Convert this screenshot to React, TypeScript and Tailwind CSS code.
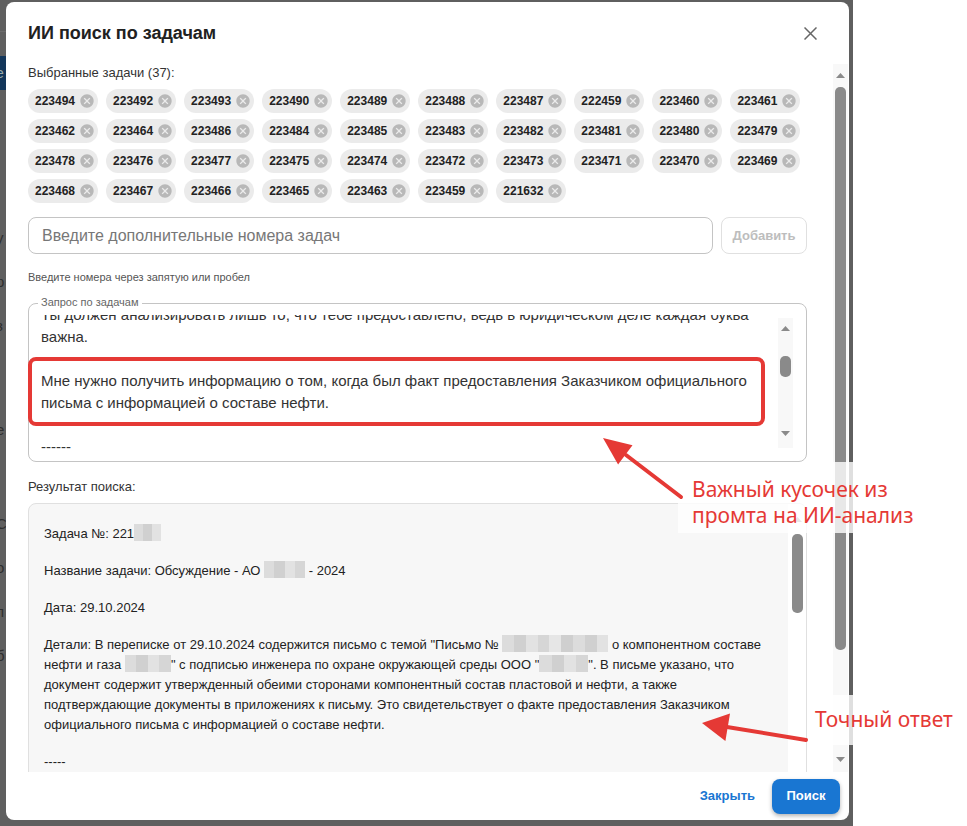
import React from 'react'

const chips = [
    '223494', '223492', '223493', '223490', '223489', '223488', '223487', '222459', '223460', '223461',
    '223462', '223464', '223486', '223484', '223485', '223483', '223482', '223481', '223480', '223479',
    '223478', '223476', '223477', '223475', '223474', '223472', '223473', '223471', '223470', '223469',
    '223468', '223467', '223466', '223465', '223463', '223459', '221632',
]

const blurCells = ['bg-[#dcdcdc]', 'bg-[#d0d0d0]', 'bg-[#e2e2e2]', 'bg-[#d6d6d6]', 'bg-[#e6e6e6]', 'bg-[#cfcfcf]']

function Blur({ className, cells }: { className: string; cells: number }) {
    return (
        <span className={`inline-flex h-[17px] align-[-3px] ${className}`}>
            {Array.from({ length: cells }).map((_, i) => (
                <span key={i} className={`h-full flex-1 ${blurCells[i % blurCells.length]}`} />
            ))}
        </span>
    )
}

function Arrow({ up }: { up?: boolean }) {
    return (
        <svg width="9" height="5" viewBox="0 0 9 5">
            <polygon points={up ? '4.5,0 9,5 0,5' : '0,0 9,0 4.5,5'} fill="#8a8a8a" />
        </svg>
    )
}

function Chip({ label }: { label: string }) {
    return (
        <div className="flex h-6 items-center rounded-full bg-[#ebebeb] pl-[7px] pr-[3px]">
            <span className="text-[12px] font-bold text-[#222]">{label}</span>
            <svg className="ml-[4px] h-4 w-4" viewBox="0 0 24 24">
                <path
                    fill="#b8b8b8"
                    d="M12 2C6.47 2 2 6.47 2 12s4.47 10 10 10 10-4.47 10-10S17.53 2 12 2zm5 13.59L15.59 17 12 13.41 8.41 17 7 15.59 10.59 12 7 8.41 8.41 7 12 10.59 15.59 7 17 8.41 13.41 12 17 15.59z"
                />
            </svg>
        </div>
    )
}

export default function App() {
    return (
        <div className="relative h-[826px] w-[967px] overflow-hidden bg-white font-['Liberation_Sans',Arial,sans-serif]">
            {/* page behind the backdrop */}
            <div className="absolute inset-y-0 left-0 w-[853px] bg-[#5f5f5f]">
                <div className="mt-[31px] h-px w-[6px] bg-[#6c6c6c]" />
                <div className="mt-[24px] flex h-[34px] w-[6px] items-center overflow-hidden bg-[#13365a] text-[14px] text-[#9aa]">
                    <span className="-ml-[4px]">e</span>
                </div>
                <div className="mt-[140px] flex w-[6px] flex-col gap-[28px] overflow-hidden text-[15px] leading-[16px] text-[#2e2e2e]">
                    <span className="-ml-[4px]">у</span>
                    <span className="-ml-[4px]">р</span>
                    <span className="-ml-[4px]">з</span>
                    <span className="mt-[60px] -ml-[4px]">е</span>
                    <span className="mt-[50px] -ml-[4px]">С</span>
                    <span className="-ml-[4px]">о</span>
                    <span className="-ml-[4px]">п</span>
                    <span className="-ml-[4px]">б</span>
                </div>
            </div>

            {/* dialog */}
            <div className="absolute left-[6px] top-[2px] flex h-[818px] w-[843px] flex-col rounded-lg bg-white">
                <div className="flex h-[62px] shrink-0 items-center justify-between pl-[22px] pr-[32px]">
                    <h2 className="text-[18px] font-bold text-[#212121]">ИИ поиск по задачам</h2>
                    <svg className="h-[13px] w-[13px]" viewBox="0 0 13 13">
                        <path d="M0.5 0.5 L12.5 12.5 M12.5 0.5 L0.5 12.5" stroke="#666" strokeWidth="1.5" />
                    </svg>
                </div>

                <div className="flex h-[708px] shrink-0">
                    <div className="min-w-0 flex-1 overflow-hidden pl-[22px] pr-[26px]">
                        <div className="text-[13px] leading-[18px] text-[#333]">Выбранные задачи (37):</div>
                        <div className="mt-[7px] flex flex-wrap gap-x-[8px] gap-y-[6px]">
                            {chips.map((c) => (
                                <Chip key={c} label={c} />
                            ))}
                        </div>

                        <div className="mt-[14px] flex gap-[8px]">
                            <div className="flex h-[37px] flex-1 items-center rounded-lg border border-[#c4c4c4] px-[13px] text-[16px] text-[#777]">
                                Введите дополнительные номера задач
                            </div>
                            <button className="h-[37px] w-[86px] rounded-lg border border-[#e0e0e0] text-[13px] font-bold text-[#bdbdbd]">
                                Добавить
                            </button>
                        </div>
                        <div className="mt-[16px] text-[11px] leading-[14px] text-[#555]">
                            Введите номера через запятую или пробел
                        </div>

                        <div className="relative mt-[19px] flex h-[159px] rounded-lg border border-[#c4c4c4]">
                            <span className="absolute -top-[9px] left-[9px] bg-white px-[3px] text-[11px] leading-[14px] text-[#666]">
                                Запрос по задачам
                            </span>
                            <div className="mt-[11px] h-[140px] flex-1 overflow-hidden pl-[12px]">
                                <div className="-mt-[11px] whitespace-nowrap text-[15px] leading-[22px] text-[#333]">
                                    <div>Ты должен анализировать лишь то, что тебе предоставлено, ведь в юридическом деле каждая буква</div>
                                    <div>важна.</div>
                                    <div>&nbsp;</div>
                                    <div>Мне нужно получить информацию о том, когда был факт предоставления Заказчиком официального</div>
                                    <div>письма с информацией о составе нефти.</div>
                                    <div>&nbsp;</div>
                                    <div>------</div>
                                </div>
                            </div>
                            <div className="mr-[13px] mt-[14px] flex h-[130px] w-[15px] flex-col items-center bg-[#f8f8f8]">
                                <div className="flex h-[21px] items-center">
                                    <Arrow up />
                                </div>
                                <div className="mt-[17px] h-[21px] w-[11px] rounded-[5px] bg-[#8a8a8a]" />
                                <div className="flex-1" />
                                <div className="mb-[10px] flex h-[10px] items-center">
                                    <Arrow />
                                </div>
                            </div>
                        </div>

                        <div className="mt-[16px] text-[13px] leading-[18px] text-[#333]">Результат поиска:</div>
                        <div className="mt-[7px] flex h-[320px] rounded-t-lg border border-[#e0e0e0] bg-[#f7f7f7]">
                            <div className="flex-1 whitespace-nowrap pl-[15px] pt-[20px] text-[13px] leading-[20px] text-[#222]">
                                <p className="mb-[17px]">
                                    Задача №: 221<Blur className="w-[27px]" cells={3} />
                                </p>
                                <p className="mb-[17px]">
                                    Название задачи: Обсуждение - АО <Blur className="w-[41px]" cells={4} /> - 2024
                                </p>
                                <p className="mb-[17px]">Дата: 29.10.2024</p>
                                <p className="mb-[17px]">
                                    Детали: В переписке от 29.10.2024 содержится письмо с темой "Письмо № <Blur className="w-[106px]" cells={9} /> о компонентном составе
                                    <br />
                                    нефти и газа <Blur className="w-[46px]" cells={4} />" с подписью инженера по охране окружающей среды ООО "<Blur className="w-[49px]" cells={4} />". В письме указано, что
                                    <br />
                                    документ содержит утвержденный обеими сторонами компонентный состав пластовой и нефти, а также
                                    <br />
                                    подтверждающие документы в приложениях к письму. Это свидетельствует о факте предоставления Заказчиком
                                    <br />
                                    официального письма с информацией о составе нефти.
                                </p>
                                <p>-----</p>
                            </div>
                            <div className="flex w-[18px] flex-col items-center rounded-tr-lg bg-white">
                                <div className="flex h-[30px] items-center">
                                    <Arrow up />
                                </div>
                                <div className="h-[79px] w-[11px] rounded-[5px] bg-[#8a8a8a]" />
                            </div>
                        </div>
                    </div>

                    <div className="mr-[1px] flex w-[15px] flex-col items-center bg-[#f8f8f8]">
                        <div className="flex h-[23px] items-center">
                            <Arrow up />
                        </div>
                        <div className="h-[563px] w-[11px] rounded-[5px] bg-[#8a8a8a]" />
                        <div className="flex-1" />
                        <div className="mb-[10px] flex h-[5px] items-center">
                            <Arrow />
                        </div>
                    </div>
                </div>

                <div className="flex flex-1 items-center justify-end gap-[15px] pr-[9px]">
                    <button className="px-[2px] text-[13px] font-bold text-[#1976d2]">Закрыть</button>
                    <button className="h-[35px] w-[68px] rounded-lg bg-[#1976d2] text-[13px] font-bold text-white shadow-[0_2px_4px_rgba(0,0,0,0.3)]">
                        Поиск
                    </button>
                </div>
            </div>

            {/* annotations */}
            <div className="absolute left-[28px] top-[357px] h-[69px] w-[737px] rounded-[8px] border-4 border-[#e53935]" />
            <div className="absolute left-[678px] top-[462px] h-[71px] w-[250px] bg-white/80 pl-[14px] pt-[14px] font-['Noto_Sans',sans-serif] text-[21px] leading-[26px] text-[#e53935]">
                <div>Важный кусочек из</div>
                <div>промта на ИИ-анализ</div>
            </div>
            <div className="absolute left-[807px] top-[695px] h-[50px] w-[160px] bg-white/80 pl-[8px] pt-[11px] font-['Noto_Sans',sans-serif] text-[21px] leading-[26px] text-[#e53935]">
                Точный ответ
            </div>
            <svg className="pointer-events-none absolute left-0 top-0" width="967" height="826" viewBox="0 0 967 826">
                <line x1="681" y1="497" x2="626" y2="455" stroke="#e53935" strokeWidth="4" strokeLinecap="round" />
                <polygon points="603,438 632.5,445.3 618.1,464.5" fill="#e53935" />
                <line x1="806" y1="740" x2="727" y2="727" stroke="#e53935" strokeWidth="4" strokeLinecap="round" />
                <polygon points="702,723 730,713.4 725.4,741" fill="#e53935" />
            </svg>
        </div>
    )
}
